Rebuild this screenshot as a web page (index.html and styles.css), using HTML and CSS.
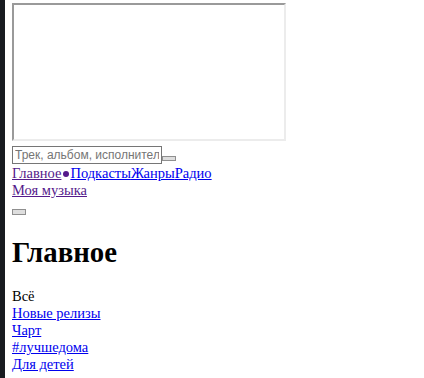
FILE: index.html
```html
<!DOCTYPE html>
<html lang="ru">
<head>
    <meta charset="UTF-8">
    <meta name="viewport" content="width=device-width, initial-scale=1.0">
    <title>Главное</title>
    <link rel="stylesheet" href="styles.css">
</head>

<body>
    <div class="page">
        <!-- player frame -->
        <div class="frame"></div>

        <form class="search">
            <input type="text" class="search-input" placeholder="Трек, альбом, исполнитель">
            <button type="submit" class="search-button"></button>
        </form>

        <nav class="nav">
            <div><a href="#" class="visited">Главное</a><span class="dot"></span><a href="#">Подкасты</a><a href="#">Жанры</a><a href="#">Радио</a></div>
            <div><a href="#" class="visited">Моя музыка</a></div>
        </nav>

        <div class="toolbar">
            <button class="menu-button"></button>
        </div>

        <h1>Главное</h1>

        <div class="tabs">
            <div>Всё</div>
            <div><a href="#">Новые релизы</a></div>
            <div><a href="#">Чарт</a></div>
            <div><a href="#">#лучшедома</a></div>
            <div><a href="#">Для детей</a></div>
        </div>
    </div>
</body>
</html>
```

FILE: styles.css
```css
html {
    background-color: #ffffff;
}

body {
    margin: 0;
    padding: 3px 0 0 7px;
    min-height: 100vh;
    box-sizing: border-box;
    border-left: 5px solid #181b20;
    font-family: "Liberation Serif", "Times New Roman", serif;
    font-size: 14.5px;
    line-height: 17px;
    color: #000;
}

a {
    color: #0000ee;
}

a.visited {
    color: #551a8b;
}

/* Player frame */
.frame {
    width: 270px;
    height: 134px;
    border: 2px solid;
    border-color: #9a9a9a #ececec #ececec #9a9a9a;
    background-color: #fff;
    margin-bottom: 5px;
}

/* Search */
.search {
    display: flex;
    align-items: flex-end;
    margin: 0;
}

.search-input {
    box-sizing: border-box;
    width: 150px;
    height: 18px;
    padding: 1px 2px;
    border: 1px solid #767676;
    font-family: "Liberation Sans", Arial, sans-serif;
    font-size: 12px;
    color: #000;
    outline: none;
}

.search-input::placeholder {
    color: #757575;
}

.search-button,
.menu-button {
    box-sizing: border-box;
    width: 14px;
    height: 5px;
    padding: 0;
    border: 1px solid #8f8f8f;
    background-color: #dedede;
}

.search-button {
    margin-bottom: 3px;
}

/* Navigation */
.nav {
    padding-top: 1px;
}

.dot {
    display: inline-block;
    width: 6px;
    height: 6px;
    margin: 0 1px 0 2px;
    border-radius: 50%;
    background-color: #551a8b;
    vertical-align: 1px;
}

.toolbar {
    padding-top: 10px;
    height: 8px;
}

.menu-button {
    display: block;
    height: 6px;
}

h1 {
    font-size: 28.8px;
    line-height: normal;
    margin: 19px 0;
}
```
